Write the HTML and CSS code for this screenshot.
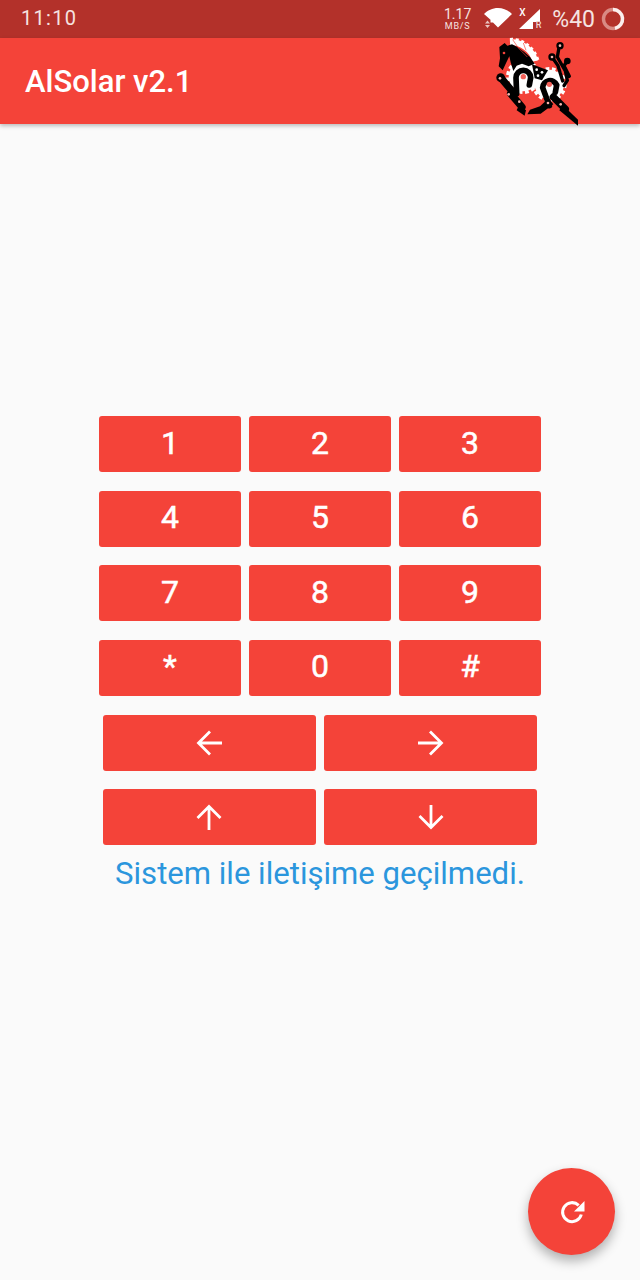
FILE: index.html
```html
<!DOCTYPE html>
<html lang="tr">
<head>
  <meta charset="UTF-8" />
  <meta name="viewport" content="width=device-width, initial-scale=1.0" />
  <title>AlSolar v2.1</title>
  <link rel="stylesheet" href="styles.css">
</head>
<body>
  <div class="status-bar">
    <span class="clock">11:10</span>
    <div class="status-icons">
      <div class="speed"><span class="speed-num">1.17</span><span class="speed-unit">MB/S</span></div>
      <div class="wifi">
        <svg width="28" height="20" viewBox="0 0 28 20">
          <path d="M0 6C3.500 2.500 8.500 0 14 0S24.500 2.500 28 6L14 19.500 9 14.500H6.500V11.800z" fill="#fff"/>
          <path d="M1 15.500l2.500-3 2.500 3zM1 17l2.500 3 2.500-3z" fill="#e9c4c0"/>
        </svg>
      </div>
      <div class="signal">
        <span class="signal-x">X</span>
        <svg width="22" height="21" viewBox="0 0 22 21">
          <path d="M21 0v13h-7v7H0z" fill="#fff"/>
        </svg>
        <span class="signal-r">R</span>
      </div>
      <span class="battery-text">%40</span>
      <svg class="battery" width="24" height="24" viewBox="0 0 24 24">
        <circle cx="12" cy="12" r="9.500" fill="none" stroke="#d98a83" stroke-width="3.400"/>
        <path d="M12 2.500a9.500 9.500 0 0 1 2 18.800" fill="none" stroke="#fbeeed" stroke-width="3.400"/>
      </svg>
    </div>
  </div>

  <header class="app-bar">
    <h1>AlSolar v2.1</h1>
    <svg class="logo" width="95" height="95" viewBox="0 0 285 285">
      <!-- mane and gears -->
      <g fill="none" stroke="#fff">
        <path d="M60 22C90 20 125 40 136 78" stroke-width="18"/>
        <path d="M60 14C92 10 132 34 144 78" stroke-width="10" stroke-dasharray="9 8"/>
        <circle cx="100" cy="125" r="47" stroke-width="10" stroke-dasharray="11 8"/>
        <circle cx="178" cy="148" r="47" stroke-width="10" stroke-dasharray="11 8"/>
      </g>
      <circle cx="100" cy="125" r="44" fill="#fff"/>
      <circle cx="178" cy="148" r="44" fill="#fff"/>
      <!-- head, neck and body -->
      <path d="M28 36L44 24 52 32 66 28 82 36 102 50 120 66 134 86 116 94 96 86 80 92 70 108 62 82 58 64 50 80 38 106 26 94 30 70z" fill="#000"/>
      <path d="M126 88L174 106 156 136 134 130z" fill="#000"/>
      <g fill="#fff">
        <circle cx="140" cy="104" r="4"/>
        <circle cx="156" cy="112" r="4"/>
        <circle cx="144" cy="122" r="4"/>
      </g>
      <path d="M68 14L86 40 112 66M100 24L108 46" fill="none" stroke="#f4423a" stroke-width="2"/>
      <circle cx="42" cy="54" r="4" fill="#f4423a"/>
      <!-- front hook and legs -->
      <path d="M80 176L78 128A22 22 0 0 1 122 128L118 150" fill="none" stroke="#000" stroke-width="17" stroke-linecap="round"/>
      <path d="M34 130L66 168M62 176L96 216" fill="none" stroke="#000" stroke-width="22" stroke-linecap="round"/>
      <circle cx="32" cy="128" r="13" fill="#000"/>
      <path d="M88 208L108 226 104 242 80 226z" fill="#000"/>
      <!-- back hook and legs -->
      <path d="M178 212L158 158A22 22 0 0 1 200 150L196 172" fill="none" stroke="#000" stroke-width="17" stroke-linecap="round"/>
      <path d="M176 190L190 208 152 236 112 238 120 224 150 214z" fill="#000"/>
      <path d="M190 186L226 222" fill="none" stroke="#000" stroke-width="22" stroke-linecap="round"/>
      <path d="M218 210L264 254 264 272 208 226z" fill="#000"/>
      <!-- tail -->
      <path d="M208 32L202 66 226 108 232 136 222 152M186 66L204 92 218 138M232 78L222 92 238 124" fill="none" stroke="#000" stroke-width="10" stroke-linecap="round"/>
      <circle cx="210" cy="32" r="11" fill="#000"/>
      <circle cx="186" cy="66" r="11" fill="#000"/>
      <circle cx="232" cy="78" r="10" fill="#000"/>
      <!-- joints -->
      <g fill="#f7b3ad">
        <circle cx="210" cy="32" r="4"/>
        <circle cx="186" cy="66" r="4"/>
        <circle cx="30" cy="130" r="4"/>
        <circle cx="56" cy="178" r="4"/>
        <circle cx="88" cy="200" r="4"/>
        <circle cx="174" cy="204" r="4"/>
        <circle cx="212" cy="208" r="4"/>
      </g>
      <circle cx="100" cy="125" r="8" fill="#f4625a"/>
      <circle cx="178" cy="148" r="8" fill="#f4625a"/>
    </svg>
  </header>

  <main class="content">
    <div class="keypad">
      <div class="row">
        <button class="key">1</button>
        <button class="key">2</button>
        <button class="key">3</button>
      </div>
      <div class="row">
        <button class="key">4</button>
        <button class="key">5</button>
        <button class="key">6</button>
      </div>
      <div class="row">
        <button class="key">7</button>
        <button class="key">8</button>
        <button class="key">9</button>
      </div>
      <div class="row">
        <button class="key">*</button>
        <button class="key">0</button>
        <button class="key">#</button>
      </div>
      <div class="row">
        <button class="key wide">
          <svg width="32" height="32" viewBox="0 0 32 32"><path d="M29 16H6M17 4.500L5.500 16 17 27.500" class="arrow"/></svg>
        </button>
        <button class="key wide">
          <svg width="32" height="32" viewBox="0 0 32 32"><path d="M3 16H26M15 4.500L26.500 16 15 27.500" class="arrow"/></svg>
        </button>
      </div>
      <div class="row">
        <button class="key wide">
          <svg width="32" height="32" viewBox="0 0 32 32"><path d="M16 29V6M4.500 17L16 5.500 27.500 17" class="arrow"/></svg>
        </button>
        <button class="key wide">
          <svg width="32" height="32" viewBox="0 0 32 32"><path d="M16 4V26M4.500 15L16 26.500 27.500 15" class="arrow"/></svg>
        </button>
      </div>
    </div>
    <p class="message">Sistem ile iletişime geçilmedi.</p>
  </main>

  <button class="fab">
    <svg width="32" height="32" viewBox="0 0 32 32">
      <path d="M22.700 9.300A9.500 9.500 0 1 0 25.300 18.500" fill="none" stroke="#fff" stroke-width="3"/>
      <path d="M28.500 5v10.500H18z" fill="#fff"/>
    </svg>
  </button>
</body>
</html>
```

FILE: styles.css
```css
* {
  box-sizing: border-box;
}
body {
  margin: 0;
  width: 640px;
  height: 1280px;
  overflow: hidden;
  position: relative;
  font-family: Roboto, sans-serif;
  background-color: #fafafa;
}
.status-bar {
  height: 38px;
  background-color: #b3312a;
  color: #f6e3e1;
  display: flex;
  align-items: center;
  justify-content: space-between;
  padding: 0 15px 0 21px;
}
.clock {
  font-size: 20px;
  letter-spacing: 1.3px;
  margin-bottom: 2px;
}
.status-icons {
  display: flex;
  align-items: center;
}
.speed {
  display: flex;
  flex-direction: column;
  align-items: center;
  line-height: 1;
  margin-right: 13px;
  gap: 1px;
}
.speed-num {
  font-size: 14px;
}
.speed-unit {
  font-size: 9px;
  letter-spacing: 0.8px;
}
.wifi {
  display: flex;
  margin-right: 7px;
  padding-bottom: 2px;
}
.signal {
  position: relative;
  display: flex;
  margin-right: 11px;
}
.signal-x {
  position: absolute;
  left: 0;
  top: -1px;
  font-size: 10px;
  line-height: 10px;
  font-weight: 500;
  color: #fff;
}
.signal-r {
  position: absolute;
  right: 0;
  bottom: 0;
  font-size: 9px;
  line-height: 9px;
  font-weight: 500;
  color: #f0d5d2;
}
.battery-text {
  font-size: 23px;
  margin-right: 6px;
}
.app-bar {
  height: 86px;
  background-color: #f44339;
  box-shadow: 0 2px 4px rgba(0, 0, 0, 0.25);
  display: flex;
  align-items: center;
  justify-content: space-between;
  padding: 0 55px 0 25px;
  position: relative;
}
.app-bar h1 {
  margin: 0;
  font-size: 31px;
  font-weight: 500;
  color: #fff;
}
.logo {
  margin-top: 2px;
}
.content {
  padding-top: 292px;
  display: flex;
  flex-direction: column;
  align-items: center;
}
.keypad {
  display: flex;
  flex-direction: column;
  gap: 18.67px;
}
.row {
  display: flex;
  justify-content: center;
  gap: 8px;
}
.key {
  width: 142px;
  height: 56px;
  padding: 0 0 3px;
  border: none;
  border-radius: 3px;
  background-color: #f44339;
  color: #fff;
  font-family: Roboto, sans-serif;
  font-size: 32px;
  font-weight: 400;
  -webkit-text-stroke: 0.5px #fff;
  display: flex;
  align-items: center;
  justify-content: center;
}
.key.wide {
  width: 213.330px;
  padding: 0;
}
.arrow {
  fill: none;
  stroke: #fff;
  stroke-width: 2.800;
}
.message {
  margin: 9px 0 0;
  font-size: 31.100px;
  line-height: 40px;
  color: #2b96dd;
}
.fab {
  position: absolute;
  left: 528px;
  top: 1168px;
  width: 87px;
  height: 87px;
  padding: 0;
  border: none;
  border-radius: 50%;
  background-color: #f44339;
  box-shadow: 0 6px 12px rgba(0, 0, 0, 0.3);
  display: flex;
  align-items: center;
  justify-content: center;
}
```
